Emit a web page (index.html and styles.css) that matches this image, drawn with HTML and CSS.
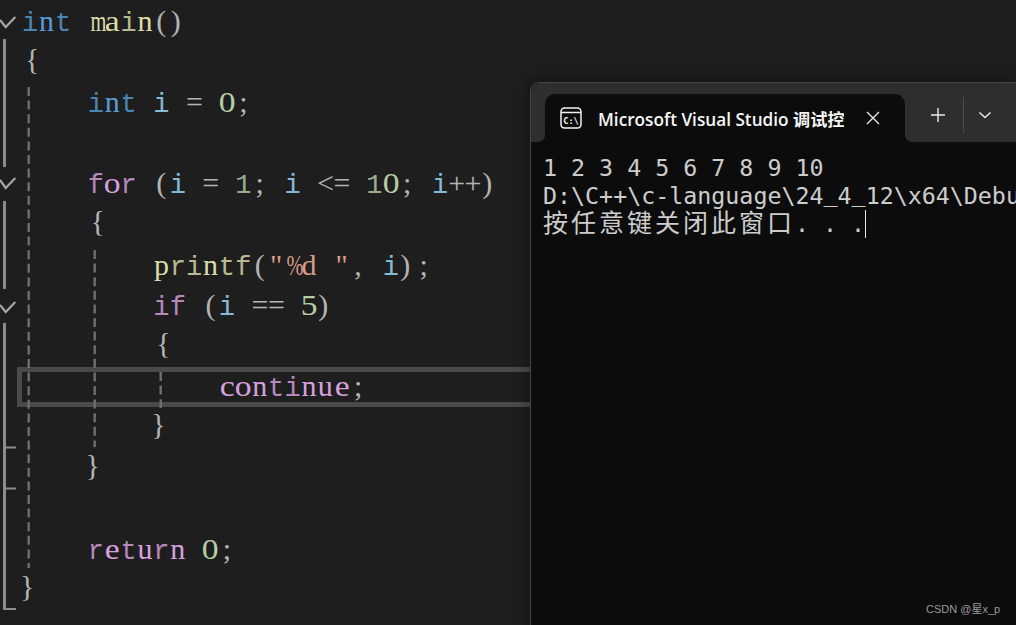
FILE: index.html
```html
<!DOCTYPE html>
<html lang="zh">
<head>
<meta charset="utf-8">
<title>Visual Studio</title>
<link rel="stylesheet" href="styles.css">
</head>
<body>
<main class="editor">
  <div class="line"><span class="ty"><i class="m">i</i><i>n</i><i class="m">t</i></span><i> </i><span class="fn"><i class="sq">m</i><i class="w">a</i><i class="m">i</i><i>n</i></span><span class="pu"><i>(</i><i class="pc">)</i></span></div>
  <div class="line"><span class="pu"><i class="bo">{</i></span></div>
  <div class="line in1"><span class="ty"><i class="m">i</i><i>n</i><i class="m">t</i></span><i> </i><span class="va"><i class="m">i</i></span><i> </i><span class="pu"><i>=</i></span><i> </i><span class="nu"><i class="w">0</i></span><span class="pu"><i>;</i></span></div>
  <div class="line"></div>
  <div class="line in1"><span class="kw"><i class="m">f</i><i class="w">o</i><i class="m">r</i></span><i> </i><span class="pu"><i>(</i></span><span class="va"><i class="m">i</i></span><i> </i><span class="pu"><i>=</i></span><i> </i><span class="nu"><i class="m">1</i></span><span class="pu"><i>;</i></span><i> </i><span class="va"><i class="m">i</i></span><i> </i><span class="pu"><i>&lt;</i><i>=</i></span><i> </i><span class="nu"><i class="m">1</i><i class="w">0</i></span><span class="pu"><i>;</i></span><i> </i><span class="va"><i class="m">i</i></span><span class="pu"><i>+</i><i>+</i><i class="pc">)</i></span></div>
  <div class="line in1"><span class="pu"><i class="bo">{</i></span></div>
  <div class="line in2"><span class="fn"><i>p</i><i class="m">r</i><i class="m">i</i><i>n</i><i class="m">t</i><i class="m">f</i></span><span class="pu"><i>(</i></span><span class="st"><i>"</i><i class="sq">%</i><i>d</i><i> </i><i>"</i></span><span class="pu"><i>,</i></span><i> </i><span class="va"><i class="m">i</i></span><span class="pu"><i class="pc">)</i><i>;</i></span></div>
  <div class="line in2"><span class="kw"><i class="m">i</i><i class="m">f</i></span><i> </i><span class="pu"><i>(</i></span><span class="va"><i class="m">i</i></span><i> </i><span class="pu"><i>=</i><i>=</i></span><i> </i><span class="nu"><i class="w">5</i></span><span class="pu"><i class="pc">)</i></span></div>
  <div class="line in2"><span class="pu"><i class="bo">{</i></span></div>
  <div class="line in3"><span class="kw"><i class="w">c</i><i class="w">o</i><i>n</i><i class="m">t</i><i class="m">i</i><i>n</i><i>u</i><i class="w">e</i></span><span class="pu"><i>;</i></span></div>
  <div class="line in2"><span class="pu"><i class="bc">}</i></span></div>
  <div class="line in1"><span class="pu"><i class="bc">}</i></span></div>
  <div class="line"></div>
  <div class="line in1"><span class="kw"><i class="m">r</i><i class="w">e</i><i class="m">t</i><i>u</i><i class="m">r</i><i>n</i></span><i> </i><span class="nu"><i class="w">0</i></span><span class="pu"><i>;</i></span></div>
  <div class="line"><span class="pu"><i class="bc">}</i></span></div>

  <div class="current-line"></div>

  <svg class="gutter" width="170" height="625" viewBox="0 0 170 625" aria-hidden="true">
    <g class="outline">
      <path d="M4.5 39V167M4.5 201V289M4.5 323V609"/>
      <path class="tick" d="M4.5 447.5H16M4.5 488.5H16M3 609H16"/>
    </g>
    <g class="chevrons">
      <path d="M0 20L5.7 27L15.3 17"/>
      <path d="M0 180L5.7 188L15.3 178"/>
      <path d="M0 305L5.7 312L15.3 302"/>
    </g>
    <g class="guides">
      <path d="M28.7 87V568"/>
      <path d="M94.7 250V447"/>
      <path d="M160.7 372V408"/>
    </g>
  </svg>
</main>

<section class="terminal">
  <header class="titlebar">
    <div class="tabrow">
      <div class="side side-left"></div>
      <div class="tab">
        <svg class="tab-icon" width="22" height="22" viewBox="0 0 22 22" aria-hidden="true">
          <rect x="1" y="1" width="20" height="20" rx="3.5"/>
          <path d="M1 5.5H21"/>
          <text x="11" y="16.5" text-anchor="middle">C:\</text>
        </svg>
        <span class="tab-title">Microsoft Visual Studio 调试控制台</span>
        <svg class="tab-close" width="14" height="14" viewBox="0 0 14 14" aria-hidden="true"><path d="M1 1L13 13M13 1L1 13"/></svg>
      </div>
      <div class="side side-right">
        <svg class="plus" width="16" height="16" viewBox="0 0 16 16" aria-hidden="true"><path d="M8 1V15M1 8H15"/></svg>
        <span class="sep"></span>
        <svg class="chev" width="14" height="10" viewBox="0 0 14 10" aria-hidden="true"><path d="M1.5 2.5L7 7.5L12.5 2.5"/></svg>
      </div>
    </div>
  </header>
  <pre class="output"><span class="oline">1 2 3 4 5 6 7 8 9 10</span>
<span class="oline">D:\C++\c-language\24<span class="us">_</span>4<span class="us">_</span>12\x64\Debu</span>
<span class="oline"><span class="cjk">按任意键关闭此窗口</span>. . .<span class="cursor"></span></span></pre>
</section>

<div class="watermark">CSDN @星x_p</div>
</body>
</html>
```

FILE: styles.css
```css
html, body {
  margin: 0;
  height: 100%;
  overflow: hidden;
  background: #1e1e1e;
}

.editor {
  position: relative;
  height: 625px;
  padding: 1px 0 0 22px;
  box-sizing: border-box;
  font-family: "Liberation Serif", "Times New Roman", serif;
  font-size: 30px;
  color: #b4b4b4;
}

.line {
  height: 40.6px;
  line-height: 40.6px;
  white-space: pre;
}
.in1 { padding-left: 65.6px; }
.in2 { padding-left: 131.2px; }
.in3 { padding-left: 196.8px; }

.line i {
  display: inline-block;
  width: 16.4px;
  text-align: center;
  font-style: normal;
  white-space: pre;
}
/* SimSun-like cells: slab letters from the mono face, round ones widened, wide ones squeezed */
.line i.m { font-family: "Liberation Mono", monospace; font-size: 27px; opacity: .82; }
.line i.w { transform: scaleX(1.12); }
.line i.sq { transform: scaleX(.68); }
.line i.bo { transform: translate(2px, -3px); }
.line i.bc { transform: translate(-3px, -3px); }
.line i.pc { transform: translateX(-2px); }

.ty { color: #569cd6; }
.fn { color: #dcdcaa; }
.va { color: #9cdcfe; }
.kw { color: #d8a0df; }
.nu { color: #b5cea8; }
.st { color: #d69d85; }
.pu { color: #b4b4b4; }

.current-line {
  position: absolute;
  left: 17px;
  top: 367px;
  width: 540px;
  height: 40px;
  box-sizing: border-box;
  border: 5px solid #4a4a4a;
}

.gutter {
  position: absolute;
  left: 0;
  top: 0;
}
.outline path { fill: none; stroke: #8c8c8c; stroke-width: 3; }
.outline .tick { stroke-width: 2; }
.chevrons path { fill: none; stroke: #a6a6a6; stroke-width: 2.2; }
.guides path { fill: none; stroke: #6e6e6e; stroke-width: 2.4; stroke-dasharray: 9 4.6; }

.terminal {
  position: absolute;
  left: 530px;
  top: 82px;
  width: 486px;
  height: 543px;
  box-sizing: border-box;
  border: 1px solid #454545;
  border-right: 0;
  border-bottom: 0;
  border-radius: 9px 0 0 0;
  background: #0c0c0c;
  overflow: hidden;
  box-shadow: 0 0 16px rgba(0, 0, 0, .45);
}

.titlebar {
  padding-top: 11px;
  background: #2e2e2e;
}
.tabrow {
  display: flex;
  height: 48px;
  background: linear-gradient(#2e2e2e 12px, #0c0c0c 12px);
}
.side { background: #2e2e2e; }
.side-left {
  width: 14px;
  border-radius: 0 0 7px 0;
}
.side-right {
  flex: 1;
  display: flex;
  align-items: center;
  padding: 0 0 6px 25px;
  border-radius: 0 0 0 7px;
}
.tab {
  width: 360px;
  box-sizing: border-box;
  display: flex;
  align-items: center;
  padding: 0 0 0 15px;
  background: #0c0c0c;
  border-radius: 10px 10px 0 0;
}
.tab-icon { flex: none; }
.tab-icon rect, .tab-icon > path { fill: none; stroke: #f2f2f2; stroke-width: 1.5; }
.tab-icon text {
  font: 700 8.5px "DejaVu Sans Mono", monospace;
  fill: #f2f2f2;
}
.tab-title {
  flex: none;
  width: 246px;
  margin-left: 16px;
  overflow: hidden;
  white-space: nowrap;
  font: 600 17.2px "Open Sans", "Noto Sans CJK SC", sans-serif;
  color: #f5f5f5;
}
.tab-close { flex: none; margin-left: 22px; }
.tab-close path { fill: none; stroke: #e8e8e8; stroke-width: 1.4; }

.plus path { fill: none; stroke: #e8e8e8; stroke-width: 1.4; }
.sep {
  width: 1px;
  height: 36px;
  margin: 0 14px 0 17px;
  background: #4a4a4a;
}
.chev path { fill: none; stroke: #e8e8e8; stroke-width: 1.5; }

.output {
  margin: 0;
  padding: 12px 0 0 12px;
  font: 23.3px/28px "DejaVu Sans Mono", "Liberation Mono", monospace;
  color: #cccccc;
  white-space: pre;
  overflow: hidden;
}
.oline { display: inline-block; height: 28px; vertical-align: top; }
.us { vertical-align: 3px; line-height: 0; }
.cjk {
  font-family: "Noto Sans CJK SC", sans-serif;
  font-size: 25px;
  letter-spacing: 3px;
  line-height: 0;
}
.cursor {
  display: inline-block;
  width: 1px;
  height: 28px;
  vertical-align: top;
  background: #e6e6e6;
}

.watermark {
  position: absolute;
  left: 926px;
  top: 602px;
  font: 11px/14px "Liberation Sans", "Noto Sans CJK SC", sans-serif;
  color: #9a9a9a;
}
```
